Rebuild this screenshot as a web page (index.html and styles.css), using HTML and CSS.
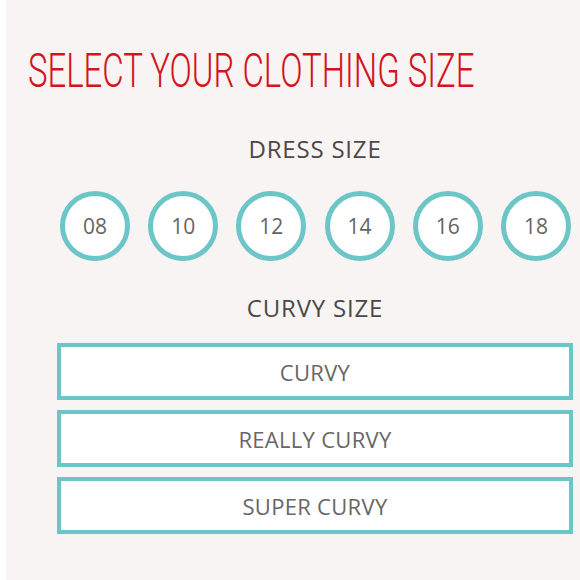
FILE: index.html
```html
<!DOCTYPE html>
<html>
<head>
<meta charset="utf-8">
<link rel="stylesheet" href="styles.css">
</head>
<body>
<div class="page">
  <h1 class="title"><span class="title-text">SELECT YOUR CLOTHING SIZE</span></h1>
  <div class="content">
    <h2 class="heading heading-dress">DRESS SIZE</h2>
    <div class="sizes">
      <div class="size">08</div>
      <div class="size">10</div>
      <div class="size">12</div>
      <div class="size">14</div>
      <div class="size">16</div>
      <div class="size">18</div>
    </div>
    <h2 class="heading heading-curvy">CURVY SIZE</h2>
    <div class="options">
      <div class="option">CURVY</div>
      <div class="option">REALLY CURVY</div>
      <div class="option">SUPER CURVY</div>
    </div>
  </div>
</div>
</body>
</html>
```
FILE: styles.css
```css
html, body {
  margin: 0;
  padding: 0;
  background: #ffffff;
}
body {
  width: 580px;
  height: 580px;
}
.page {
  margin-left: 6px;
  height: 580px;
  background: #f8f4f3;
  padding-top: 46px;
  box-sizing: border-box;
}
.title {
  margin: 0;
  padding-left: 22px;
  font-family: Roboto, sans-serif;
  font-weight: 300;
  font-size: 49px;
  line-height: 49px;
  color: #d2151c;
  white-space: nowrap;
}
.title-text {
  display: inline-block;
  margin-right: -220px;
  transform: scaleX(0.672);
  transform-origin: left center;
}
.content {
  margin-left: 51px;
  width: 516px;
  display: flex;
  flex-direction: column;
  font-family: "Open Sans", sans-serif;
}
.heading {
  margin: 0;
  text-align: center;
  font-weight: 400;
  color: #4a4848;
  font-size: 24px;
  line-height: 24px;
  letter-spacing: 0.8px;
}
.heading-dress {
  margin-top: 42px;
}
.heading-curvy {
  margin-top: 35px;
}
.sizes {
  margin-top: 30px;
  padding-left: 3px;
  width: 511px;
  display: flex;
  justify-content: space-between;
}
.size {
  width: 70px;
  height: 70px;
  box-sizing: border-box;
  border: 5px solid #6cc5c6;
  border-radius: 50%;
  background: #ffffff;
  display: flex;
  align-items: center;
  justify-content: center;
  font-size: 21px;
  color: #666464;
}
.options {
  margin-top: 23px;
  display: flex;
  flex-direction: column;
  gap: 10px;
}
.option {
  height: 57px;
  box-sizing: border-box;
  border: 4px solid #6cc5c6;
  background: #ffffff;
  display: flex;
  align-items: center;
  justify-content: center;
  font-size: 22px;
  letter-spacing: 0.3px;
  color: #686666;
}
```
